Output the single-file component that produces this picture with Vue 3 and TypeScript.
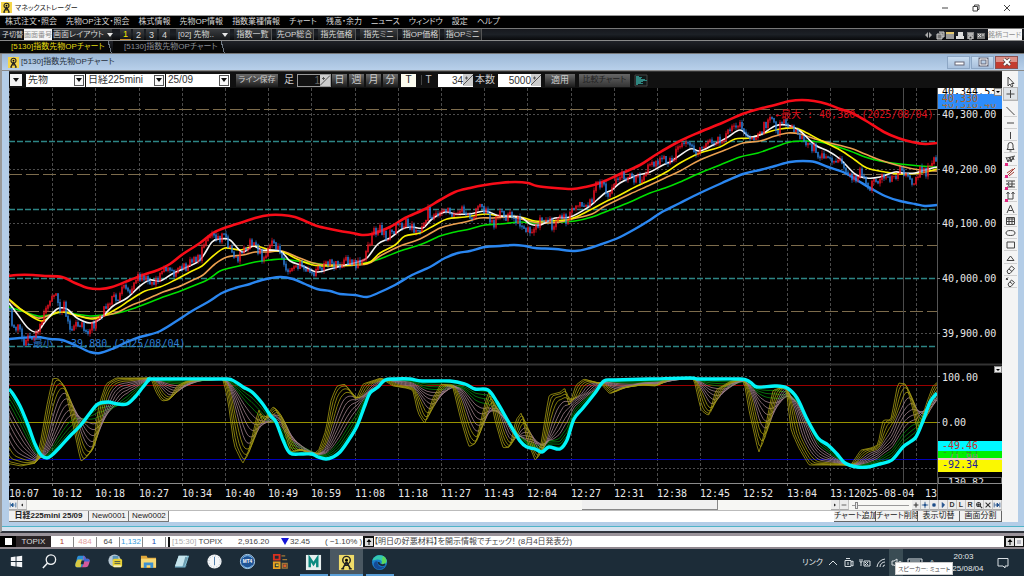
<script setup lang="ts">
import { computed, ref } from 'vue'

type Pt = [number, number]

const menus = ['株式注文・照会', '先物OP注文・照会', '株式情報', '先物OP情報', '指数業種情報', 'チャート', '残高・余力', 'ニュース', 'ウィンドウ', '設定', 'ヘルプ']
const shortcuts = ['指数一覧', '先OP総合', '指先価格', '指先ミニ', '指OP価格', '指OPミニ']
const pages = ['1', '2', '3', '4']
const spans = ['日', '週', '月', '分']
const times = ['10:07', '10:12', '10:18', '10:27', '10:34', '10:40', '10:49', '10:59', '11:08', '11:18', '11:27', '11:43', '12:04', '12:27', '12:31', '12:38', '12:45', '12:52', '13:04', '13:12']
const gridX = Array.from({ length: 22 }, (_, i) => Math.round(9 + 43.2 * i) + 0.5)
const prices = [
  { y: 114, t: '40,300.00' },
  { y: 169, t: '40,200.00' },
  { y: 223, t: '40,100.00' },
  { y: 278, t: '40,000.00' },
  { y: 333, t: '39,900.00' },
]

function parse(s: string): Pt[] {
  return s.trim().split(/\s+/).map((p) => p.split(',').map(Number) as Pt)
}
function valueAt(pts: Pt[], x: number): number {
  if (x <= pts[0][0]) return pts[0][1]
  for (let i = 1; i < pts.length; i++) {
    if (x <= pts[i][0]) {
      const [x0, y0] = pts[i - 1]
      const [x1, y1] = pts[i]
      return y0 + ((y1 - y0) * (x - x0)) / (x1 - x0)
    }
  }
  return pts[pts.length - 1][1]
}
function smooth(pts: Pt[]): string {
  let d = `M${pts[0][0]} ${pts[0][1]}`
  for (let i = 0; i < pts.length - 1; i++) {
    const p0 = pts[Math.max(i - 1, 0)]
    const p1 = pts[i]
    const p2 = pts[i + 1]
    const p3 = pts[Math.min(i + 2, pts.length - 1)]
    const c = [p1[0] + (p2[0] - p0[0]) / 6, p1[1] + (p2[1] - p0[1]) / 6, p2[0] - (p3[0] - p1[0]) / 6, p2[1] - (p3[1] - p1[1]) / 6]
    d += `C${c.map((v) => v.toFixed(1)).join(' ')} ${p2[0]} ${p2[1]}`
  }
  return d
}

const upper = parse('9,276 17,275 33,275 45,276 62,277 75,283 88,288 100,289 112,287 130,280 143,275 158,270 170,264 183,254 200,243 213,233 227,227 243,222 255,218 270,215 282,215 295,217 305,221 317,226 330,229 340,231 352,233 362,235 372,234 390,227 405,218 425,209 440,200 455,192 470,188 485,185 500,183 515,182 528,183 537,186 555,188 572,189 585,187 600,183 618,175 640,165 657,154 680,141 700,132 722,123 740,115 755,110 775,105 790,101 802,100 814,101 827,104 840,109 852,113 868,122 884,132 898,138 912,142 925,144 937,143')
const lower = parse('9,339 20,338 37,337 50,339 62,340 75,345 90,352 100,353 112,349 127,342 140,337 158,332 175,322 192,311 208,302 222,293 235,288 250,284 262,280 280,277 293,279 305,284 317,289 330,291 340,294 355,295 367,297 378,293 395,285 412,275 430,267 445,258 458,253 470,251 485,247 500,246 514,245 525,246 535,248 555,249 575,251 590,248 602,244 618,238 635,229 650,220 662,212 680,203 700,193 722,183 743,174 760,170 775,166 790,162 803,161 815,162 828,167 843,172 857,180 870,188 885,196 900,201 915,204 925,206 937,205')
const green = parse('9,307 22,311 38,316 50,315 62,312 75,314 90,316 103,315 118,313 135,308 148,303 163,297 178,292 193,286 207,280 220,271 230,268 243,265 255,262 270,260 283,259 297,261 313,263 327,265 340,265 358,264 370,262 385,257 400,251 422,244 440,236 455,232 470,229 485,225 500,224 520,222 535,223 560,222 575,221 592,217 610,210 630,202 650,193 665,188 680,182 700,173 720,165 740,157 758,153 775,147 790,142 805,141 820,142 835,146 850,151 865,157 880,161 900,164 920,166 937,167')
const orange = parse('9,300 20,309 38,318 50,315 62,312 75,315 90,318 103,316 118,312 130,306 145,300 163,292 178,287 193,280 203,275 215,264 227,257 243,255 255,252 268,252 282,251 297,257 313,263 325,265 340,265 367,264 380,256 400,246 420,239 440,228 455,224 465,222 480,218 493,218 510,217 525,220 540,223 560,222 572,219 592,214 605,206 630,194 650,185 665,178 680,171 700,160 725,150 743,143 760,141 775,136 788,133 800,134 815,139 830,143 850,148 865,154 880,160 900,166 920,170 937,171')
const yellow = parse('9,299 22,310 38,320 45,320 55,313 65,312 75,315 92,319 103,316 118,308 130,300 145,291 160,287 175,280 190,272 202,266 213,256 225,248 240,250 255,246 270,250 283,252 297,259 313,265 330,266 355,265 370,262 380,253 395,245 405,236 420,233 435,225 447,219 465,217 485,214 500,216 520,217 535,221 548,221 570,219 590,210 605,202 620,195 637,186 655,178 668,171 680,163 700,153 720,147 735,139 750,138 765,133 780,129 795,128 805,132 820,140 840,150 855,160 867,168 885,172 900,174 920,173 937,169')
const white = parse('9,303 18,315 28,328 37,332 45,322 57,309 67,309 77,318 90,323 100,319 113,306 127,298 140,286 150,280 160,281 172,274 185,268 200,260 212,242 220,239 230,240 242,252 253,246 262,250 280,251 290,261 303,266 317,272 330,269 345,265 358,262 367,258 378,244 390,238 402,229 412,227 423,228 432,219 445,212 455,214 470,214 485,211 500,216 520,217 530,224 540,225 555,218 570,217 587,208 597,200 605,193 612,190 620,183 635,176 650,172 663,165 672,161 690,149 700,151 715,144 728,137 740,130 750,137 762,134 775,126 787,125 800,131 815,145 828,151 840,159 855,174 867,178 880,177 895,172 903,173 915,173 925,170 937,167')
const price = parse('9,308 12,322 18,328 24,343 30,337 38,333 42,320 48,307 53,294 57,296 60,308 64,305 68,322 74,330 78,322 88,332 95,322 101,313 112,297 118,299 123,288 128,292 137,277 145,275 153,284 162,272 170,265 175,273 183,268 190,262 200,256 206,236 213,230 219,238 224,234 230,247 237,260 245,248 253,240 262,257 272,244 280,250 287,270 295,262 302,266 313,276 320,266 330,263 340,266 345,260 352,264 360,263 368,248 373,232 380,228 386,237 395,228 405,222 412,228 420,232 428,211 433,216 440,209 447,208 455,215 463,209 470,219 480,204 488,214 493,224 500,215 513,216 522,224 534,233 540,219 547,217 553,226 562,217 568,220 575,205 582,204 587,201 592,203 595,184 603,182 608,195 615,182 622,175 632,178 641,178 645,170 655,163 662,159 670,162 676,152 683,144 690,142 697,153 705,147 713,140 722,142 730,131 738,123 744,132 750,142 757,136 766,123 772,118 777,131 785,119 795,132 803,138 808,147 815,147 820,158 826,152 833,162 840,160 845,173 855,178 860,170 870,187 878,180 882,170 888,179 895,176 900,168 908,176 915,183 920,166 925,174 931,163 935,160 937,165')

const overlays = [
  { d: smooth(lower), c: '#2a86f0', w: 2.4 },
  { d: smooth(upper), c: '#f80c18', w: 2.6 },
  { d: smooth(green), c: '#00e000', w: 1.6 },
  { d: smooth(orange), c: '#eca050', w: 1.6 },
  { d: smooth(yellow), c: '#f8f000', w: 1.6 },
  { d: smooth(white), c: '#f4f4f4', w: 1.6 },
]

const candles = computed(() => {
  let seed = 17
  const rnd = () => {
    seed = (seed * 16807) % 2147483647
    return seed / 2147483647 - 0.5
  }
  const up: string[] = []
  const down: string[] = []
  const upWick: string[] = []
  const downWick: string[] = []
  let prev = price[0][1]
  for (let x = 10; x < 937; x += 2) {
    const close = valueAt(price, x) + rnd() * 9
    const isUp = close < prev
    const top = Math.min(prev, close)
    const bottom = Math.max(prev, close) + 1
    const body = `M${x} ${top.toFixed(1)}V${bottom.toFixed(1)}`
    const wick = `M${x} ${(top - Math.abs(rnd()) * 6).toFixed(1)}V${(bottom + Math.abs(rnd()) * 6).toFixed(1)}`
    ;(isUp ? up : down).push(body)
    ;(isUp ? upWick : downWick).push(wick)
    prev = close
  }
  return { up: up.join(''), down: down.join(''), upWick: upWick.join(''), downWick: downWick.join('') }
})

const slow = parse('9,389 13,394 20,406 28,425 35,444 41,455 47,458 52,455 60,447 70,436 80,426 90,413 98,404 108,402 118,404 127,404 135,397 143,387 149,380 155,379 220,379 232,380 243,387 252,392 262,403 270,415 276,422 283,440 290,453 302,454 312,454 318,457 326,459 333,457 340,452 348,441 357,426 365,405 370,393 378,387 385,380 395,379 410,379 422,381 450,381 465,384 475,389 488,390 497,402 508,421 520,441 527,447 535,449 542,452 549,447 560,449 567,440 574,419 583,408 595,393 604,381 615,380 650,379 690,378 700,379 740,379 750,382 757,387 775,386 787,388 797,398 807,419 818,438 828,445 837,454 845,463 857,467 868,467 880,464 892,460 903,447 910,442 916,437 923,421 930,402 937,393')
const fast = parse('-60,380 -20,380 5,463 20,466 35,463 40,440 46,405 52,378 58,379 64,388 70,415 80,462 86,456 92,448 98,405 105,384 115,378 150,378 155,392 161,401 168,400 176,386 186,381 222,379 227,400 233,445 242,464 248,450 254,425 258,408 262,424 268,412 273,406 280,420 290,452 300,449 310,456 318,450 325,430 330,400 336,386 344,384 355,400 362,384 380,378 392,386 405,388 412,390 417,413 424,424 432,398 440,384 452,387 460,420 468,447 475,443 482,412 488,390 494,420 502,448 509,447 515,420 521,412 526,440 535,462 540,445 548,395 560,392 564,387 568,407 575,385 583,379 600,384 609,394 620,388 640,385 655,386 663,379 693,379 700,410 708,416 715,390 730,381 743,380 748,410 758,454 764,430 772,390 780,388 785,386 790,430 798,448 808,465 850,465 860,450 870,448 877,445 882,420 890,420 897,383 905,384 911,405 917,433 925,405 932,386 937,382')

const fan = Array.from({ length: 13 }, (_, i) => {
  const t = i / 12.5
  const half = 1 + t * 22
  const pts: Pt[] = []
  for (let x = 9; x <= 937; x += 2) {
    let sum = 0
    for (let k = 0; k < 9; k++) sum += valueAt(fast, x - (half * 2 * k) / 9)
    const mix = Math.pow(t, 1.5)
    pts.push([x, (sum / 9) * (1 - mix) + valueAt(slow, x) * mix])
  }
  const c = i < 4 ? '#a49b12' : i < 9 ? '#a08089' : '#078a0c'
  return { d: 'M' + pts.map((p) => `${p[0]} ${p[1].toFixed(1)}`).join('L'), c }
}).reverse()
const slowPath = smooth(slow)

const tools = [
  { n: '選択', d: 'M4 1v9l2-2 1.5 3 1.5-1-1.500-2.500H10z' },
  { n: '十字', d: 'M6.500 2v8M2.500 6h8' },
  { n: 'トレンドライン', d: 'M2.500 2l8 8' },
  { n: '水平線', d: 'M3 6h7' },
  { n: '垂直線', d: 'M6.500 3v7' },
  { n: 'アラーム', d: 'M3 8.500h7L9 7V4a2.500 2.500 0 0 0-5 0v3zM5.500 10h2' },
  { n: '波動', d: 'M2 3l2 5 2-5 1 5 2-5 1 3M3 4l8-2M5 7l4-2', m: true },
  { n: 'チャネル', d: 'M3 10l8-8M3 7l6-4M5 10l5-4', m: true, r: true },
  { n: 'フィボナッチ', d: 'M2 3h9M2 6h9M3 9h8M5 4a2 2 0 1 0 3 4M8 3v6', m: true },
  { n: '期間', d: 'M4 3v6h5V3M2.500 4L4 2l1.500 2M7.500 4L9 2l1.500 2', m: true },
  { n: 'テキスト', d: 'M3 10l3.500-8L10 10M4.500 7.500h4' },
  { n: '表', d: 'M2.500 2.500h8v7h-8zM2.500 4h8M2.500 6.500h8M5 3v6.500M8 3v6.500' },
  { n: '楕円', d: 'M2 6a4.500 2.500 0 1 0 9 0a4.500 2.500 0 1 0-9 0' },
  { n: '四角形', d: 'M3 3h7.500v6H3z' },
  { n: '三角形', d: 'M6.500 4L3 8.500h7z' },
  { n: '消去', d: 'M3 7l4.500-5 3 2.500L6 9.500H4zM5 5l3 2.500' },
  { n: '全消去', d: 'M4 8l3.500-4 3 2.500L7 10.500H5zM2 2l2 2M4 1.500L2 4M6 6l2.500 2' },
]
const navButtons = [
  { n: '拡大', d: 'M5 2v6M2 5h6' },
  { n: '移動', d: 'M5 1v8M1 5h8M4 4h2v2H4z', b: true },
  { n: '停止', d: 'M3.500 3.500h3v3h-3z', b: true },
  { n: '再生', d: 'M4 2l3 3-3 3z', b: true },
]
const navButtons2 = [
  { n: '検索', d: 'M2 4.500a2.500 2.500 0 1 0 5 0a2.500 2.500 0 1 0-5 0M6.500 6.500L9 9M3 4.500h3M4.500 3v3' },
  { n: '閉じる', d: 'M2 2l6 6M8 2L2 8' },
  { n: '最後へ', d: 'M1.500 2v6M8.500 2v6M2 5h5M5 2.500L7.500 5 5 7.500z', b: true },
]
const quotes = [
  { t: '1', c: 'q-red' },
  { t: '484', c: 'q-pink' },
  { t: '64', c: 'q-dark' },
  { t: '1,132', c: 'q-sky' },
  { t: '1', c: 'q-blue' },
]
const product = ref('先物')
const issue = ref('日経225mini')
const month = ref('25/09')
const ticks = ref('34')
const count = ref('5000')
const minutes = ref('1')
const screenNo = ref('')
const code = ref('')
const zoomLevel = ref(5)
</script>

<template>
  <div class="desk">
    <header class="titlebar">
      <svg class="logo" viewBox="0 0 12 12"><rect width="12" height="12" fill="#f5d64a" /><path d="M6 5.500L3 11M6 5.500L9 11M2.500 11h2M7.500 11h2M4 8.500h4" stroke="#222" stroke-width="1.300" fill="none" /><circle cx="6" cy="4" r="2.700" fill="none" stroke="#222" stroke-width="1.200" /><circle cx="6" cy="4" r="1" /></svg>
      <h1>マネックストレーダー</h1>
      <div class="winbtns">
        <button aria-label="最小化"><svg viewBox="0 0 10 10"><path d="M2 5h6" /></svg></button>
        <button aria-label="元に戻す"><svg viewBox="0 0 10 10"><path d="M2 3.500h4.500V8H2zM3.500 3.500V2H8v4.500H6.500" /></svg></button>
        <button aria-label="閉じる"><svg viewBox="0 0 10 10"><path d="M2 2l6 6M8 2L2 8" /></svg></button>
      </div>
    </header>

    <nav class="menu"><a v-for="m in menus" :key="m" href="#">{{ m }}</a></nav>

    <div class="toolbar">
      <span class="sw">子切替</span>
      <input v-model="screenNo" class="screen-no" aria-label="画面番号" placeholder="画面番号" />
      <button class="tb layout">画面レイアウト<i class="tri"></i></button>
      <div class="pages"><button v-for="(p, i) in pages" :key="p" class="tb page" :class="{ on: i === 0 }">{{ p }}</button></div>
      <button class="tb preset"><span>[02] 先物..</span><i class="tri"></i></button>
      <div class="shorts"><button v-for="s in shortcuts" :key="s" class="tb raised">{{ s }}</button></div>
      <svg class="tray-icons" viewBox="0 0 62 10">
        <path d="M4 2v6L1 5zM5 2v6l3-3z" fill="#aaa" /><path d="M13 4h5v5h-5zM15 2h5v5h-2" fill="#777" stroke="#ccc" />
        <path d="M22 2h8v7h-8z" fill="#999" /><path d="M22 2h8v2h-8z" fill="#e4c870" /><path d="M34 2h5v4h-5zM32 6h8v3h-8z" fill="#ddd" />
        <path d="M43 2h7v7h-7z" fill="#888" /><path d="M44 4h5M45 6h3v3h-3z" stroke="#ddd" fill="#333" /><path d="M53 3h8v6h-8z" fill="#777" /><path d="M54 4l3 3M57 4l-3 3M58 5h2" stroke="#ddd" />
      </svg>
      <input v-model="code" class="code" aria-label="銘柄コード" placeholder="銘柄コード" />
    </div>

    <div class="doctabs">
      <a href="#" class="doctab on">[5130]指数先物OPチャート</a>
      <a href="#" class="doctab">[5130]指数先物OPチャート</a>
    </div>

    <section class="mdi">
      <div class="mdi-title">
        <svg class="logo" viewBox="0 0 12 12"><rect width="12" height="12" fill="#f5d64a" /><path d="M6 5.500L3 11M6 5.500L9 11M2.500 11h2M7.500 11h2M4 8.500h4" stroke="#222" stroke-width="1.300" fill="none" /><circle cx="6" cy="4" r="2.700" fill="none" stroke="#222" stroke-width="1.200" /><circle cx="6" cy="4" r="1" /></svg>
        <h2>[5130]指数先物OPチャート</h2>
        <div class="mdi-btns">
          <button aria-label="ウィンドウ最小化"><svg viewBox="0 0 12 10"><rect x="2" y="5" width="9" height="3" fill="#fff" stroke="#667" /></svg></button>
          <button aria-label="ウィンドウ最大化"><svg viewBox="0 0 12 10"><path d="M3 2h7v6H3z" fill="none" stroke="#667" stroke-width="3" /><path d="M3 2h7v6H3z" fill="none" stroke="#fff" /></svg></button>
          <button class="x" aria-label="ウィンドウを閉じる"><svg viewBox="0 0 12 10"><path d="M3 2l6 6M9 2L3 8" stroke="#544" stroke-width="3.500" /><path d="M3 2l6 6M9 2L3 8" stroke="#fff" stroke-width="2" /></svg></button>
        </div>
      </div>

      <div class="mdi-body">
        <div class="main">
          <div class="chartbar">
            <button class="drop" aria-label="メニュー"><i class="tri dark"></i></button>
            <label class="pick p1"><select v-model="product" aria-label="商品"><option>先物</option></select><span class="arr"><i class="tri dark"></i></span></label>
            <label class="pick p2"><select v-model="issue" aria-label="銘柄"><option>日経225mini</option></select><span class="arr"><i class="tri dark"></i></span></label>
            <label class="pick p3"><select v-model="month" aria-label="限月"><option>25/09</option></select><span class="arr"><i class="tri dark"></i></span></label>
            <button class="cb save">ライン保存</button>
            <label class="lab" for="minutes">足</label>
            <div class="num black"><input id="minutes" v-model="minutes" /><svg viewBox="0 0 10 10"><path d="M0 10L10 0M2 3h3M3.500 1.500v3" stroke="#555" /></svg></div>
            <div class="spans"><button v-for="s in spans" :key="s" class="cb sq">{{ s }}</button><button class="cb sq act">T</button></div>
            <label class="lab tl" for="ticks">T</label>
            <div class="num n34"><input id="ticks" v-model="ticks" /><svg viewBox="0 0 10 10"><path d="M0 10L10 0M2 3h3M3.500 1.500v3" stroke="#555" /></svg></div>
            <label class="lab" for="count">本数</label>
            <div class="num n5000"><input id="count" v-model="count" /><svg viewBox="0 0 10 10"><path d="M0 10L10 0M2 3h3M3.500 1.500v3" stroke="#555" /></svg></div>
            <button class="cb apply">適用</button>
            <button class="cb cmp" disabled>比較チャート</button>
            <svg class="depth" viewBox="0 0 14 13"><path d="M1 1h12v11H1z" fill="#101818" stroke="#444" /><path d="M2 2h3v1h3v1h-1v1h4v1h2v1H9v1H7v1h2v1H4v1H2z" fill="#2f8680" /></svg>
          </div>

          <svg class="chart" viewBox="9 88 993 412" role="img" aria-label="日経225mini チャート">
            <defs>
              <clipPath id="plot"><rect x="9" y="88" width="928" height="412" /></clipPath>
              <clipPath id="c1"><rect x="938" y="88" width="64" height="6" /></clipPath>
              <clipPath id="c2"><rect x="938" y="104" width="64" height="5" /></clipPath>
              <clipPath id="c3"><rect x="938" y="451" width="64" height="3" /></clipPath>
              <clipPath id="c4"><rect x="938" y="454" width="64" height="5" /></clipPath>
              <clipPath id="c5"><rect x="938" y="477" width="64" height="6" /></clipPath>
            </defs>
            <rect x="9" y="88" width="993" height="412" fill="#000" />
            <g stroke="#4a4a4a" stroke-dasharray="3 2">
              <path v-for="x in gridX" :key="x" :d="`M${x} 88V483`" />
            </g>
            <g stroke="#4c4c4c" stroke-dasharray="2 2">
              <path v-for="p in prices" :key="p.y" :d="`M9 ${p.y + 0.5}H937`" />
              <path d="M9 376.500H937M9 468.500H937" />
            </g>
            <path d="M9 109.500H937M9 174.500H937M9 245.500H937M9 311.500H937" stroke="#7d6c4c" stroke-dasharray="13 4" />
            <path d="M9 141.500H937M9 209.500H937M9 278.500H937M9 346.500H937" stroke="#2d8585" stroke-width="1.500" stroke-dasharray="6 2" />
            <path d="M9 364.500H1002" stroke="#333" stroke-width="2" />
            <path d="M903.500 88V483" stroke="#4b4b4b" />
            <g clip-path="url(#plot)" fill="none">
              <path :d="candles.upWick" stroke="#d01022" stroke-width=".8" />
              <path :d="candles.downWick" stroke="#2368b4" stroke-width=".8" />
              <path v-for="o in overlays" :key="o.c" :d="o.d" :stroke="o.c" :stroke-width="o.w" />
              <path :d="candles.up" stroke="#f01020" stroke-width="1.300" />
              <path :d="candles.down" stroke="#2c80dc" stroke-width="1.300" />
            </g>
            <text x="27" y="347" fill="#2d7cd0">←最小 : 39,880 (2025/08/04)</text>
            <text x="775" y="118" fill="#dc0c18">←最大 : 40,380 (2025/08/04)</text>

            <path d="M9 385.500H937" stroke="#9a0000" />
            <path d="M9 422.500H937" stroke="#989100" />
            <path d="M9 459.500H937" stroke="#0000b8" />
            <g fill="none" clip-path="url(#plot)">
              <path v-for="(f, i) in fan" :key="i" :d="f.d" :stroke="f.c" stroke-width=".8" />
              <path :d="slowPath" stroke="#00f4f8" stroke-width="3.400" />
            </g>
            <path d="M9 483.500H1002" stroke="#8b8b8b" />
            <path d="M937.500 88V500" stroke="#555" />
            <g stroke="#777">
              <path v-for="x in gridX" :key="x" :d="`M${x} 484v2`" />
              <path v-for="p in prices" :key="p.y" :d="`M937 ${p.y + 0.5}h3`" />
              <path d="M937 376.500h3M937 422.500h3" />
            </g>
            <g fill="#e8e8e8">
              <text v-for="(t, i) in times" :key="t" :x="Math.round(9 + 43.2 * i)" y="497">{{ t }}</text>
              <text v-for="p in prices" :key="p.t" x="942" :y="p.y + 4">{{ p.t }}</text>
              <text x="942" y="381">100.00</text>
              <text x="942" y="426">0.00</text>
              <path d="M854 487h73v13h-73z" fill="#000" />
              <text x="854" y="497">2025-08-04</text>
              <text x="925" y="497">13</text>
            </g>
            <path d="M938 88h64v6h-64z" fill="#fff" />
            <text x="942" y="95" fill="#000" clip-path="url(#c1)">40,344.53</text>
            <path d="M938 94h64v15h-64z" fill="#2e8cfa" />
            <text x="942" y="102" fill="#a8642c">40,330</text>
            <text x="942" y="108" fill="#9a7048" clip-path="url(#c2)">40,318.40</text>
            <g><rect x="994.500" y="88.500" width="7" height="7" fill="#e8e8e8" stroke="#888" /><path d="M996 91h4l-2 2z" /><rect x="994.500" y="366.500" width="7" height="6" fill="#e8e8e8" stroke="#888" /><path d="M996 369h4l-2 2z" /></g>
            <path d="M938 441h64v10h-64z" fill="#00f8ff" />
            <text x="942" y="449" fill="#c0302c">-49.46</text>
            <path d="M938 451h64v7h-64z" fill="#00f000" />
            <text x="942" y="455" fill="#2f9c20" clip-path="url(#c3)">-57.45</text>
            <text x="942" y="461" fill="#8f8a80" clip-path="url(#c4)">-71.90</text>
            <path d="M938 458h64v2h-64z" fill="#f4c8d0" />
            <path d="M938 460h64v12h-64z" fill="#fbf800" />
            <text x="942" y="468" fill="#1c1c9c">-92.34</text>
            <path d="M938.500 483V477.500H1001.500V483" fill="none" stroke="#666" />
            <text x="942" y="486" fill="#e0e0e0" clip-path="url(#c5)">-130.82</text>
          </svg>

          <div class="scroll">
            <button class="sb" aria-label="先頭へ"><svg viewBox="0 0 10 10"><path d="M1.500 2v6M8.500 2v6M2 5h5M5 2.500L2.500 5 5 7.500z" stroke="#235a94" fill="#235a94" /></svg></button>
            <button class="sb" aria-label="左へ"><svg viewBox="0 0 10 10"><path d="M6 3v4L4 5z" /></svg></button>
            <div class="track"><div class="thumb"></div></div>
            <button class="sb" aria-label="右へ"><svg viewBox="0 0 10 10"><path d="M4 3v4l2-2z" /></svg></button>
            <button class="sb" aria-label="縮小"><svg viewBox="0 0 10 10"><path d="M2 5h6" stroke="#444" /></svg></button>
            <input v-model="zoomLevel" class="range" type="range" min="0" max="100" aria-label="倍率" />
            <button v-for="b in navButtons" :key="b.n" class="sb" :aria-label="b.n"><svg viewBox="0 0 10 10"><path :d="b.d" :class="b.b ? 'ib' : 'ik'" /></svg></button>
            <button class="sb tx">D</button><button class="sb tx">L</button><button class="sb tx">R</button>
            <button v-for="b in navButtons2" :key="b.n" class="sb" :aria-label="b.n"><svg viewBox="0 0 10 10"><path :d="b.d" :class="b.b ? 'ib' : 'ik'" /></svg></button>
          </div>

          <div class="sheets">
            <button class="sheet on">日経225mini 25/09</button>
            <button class="sheet">New0001</button>
            <button class="sheet">New0002</button>
            <div class="acts"><button>チャート追加</button><button>チャート削除</button><button>表示切替</button><button>画面分割</button></div>
          </div>
        </div>

        <aside class="palette">
          <div class="tools">
            <button v-for="(t, i) in tools" :key="t.n" :aria-label="t.n" :class="{ on: i === 1 }">
              <svg viewBox="0 0 13 12"><path :d="t.d" fill="none" :stroke="t.r ? '#a43c30' : '#444'" /><path v-if="t.m" d="M1 9h3v3H1z" fill="#e02880" /></svg>
            </button>
          </div>
        </aside>
      </div>
    </section>

    <div class="ticker">
      <button class="tk-box" aria-label="表示切替"><i></i></button>
      <b>TOPIX</b>
      <span v-for="(q, i) in quotes" :key="i" class="q" :class="q.c">{{ q.t }}</span>
      <span class="idx"><em>[15:30]</em> TOPIX</span>
      <span class="val">2,916.20</span>
      <span class="chg"><i></i>32.45</span>
      <span class="pct">( −1.10% )</span>
      <button class="tk-up" aria-label="前へ"><svg viewBox="0 0 8 8"><path d="M0 0h8v8H0z" fill="#ddd" /><path d="M4 1L1.500 4h2v3h1V4h2z" /></svg></button>
      <a class="news" href="#">【明日の好悪材料】を開示情報でチェック！ (8月4日発表分)</a>
      <div class="tk-end">
        <button aria-label="上へ"><svg viewBox="0 0 8 8"><path d="M0 0h8v8H0z" fill="#ddd" /><path d="M4 1L1.500 4h2v3h1V4h2z" /></svg></button>
        <button aria-label="一覧"><svg viewBox="0 0 8 8"><path d="M0 0h8v8H0z" fill="#eee" /><path d="M2 3h4M2 5h4" stroke="#889" /></svg></button>
      </div>
    </div>

    <footer class="taskbar">
      <button aria-label="スタート"><svg viewBox="0 0 18 18"><path d="M3 4.500l5-.7v4.700H3zM9 3.600l6-.8v5.700H9zM3 9.500h5v4.700l-5-.7zM9 9.500h6v5.700l-6-.8z" fill="#f4f6f8" /></svg></button>
      <button aria-label="検索"><svg viewBox="0 0 18 18"><circle cx="10.500" cy="7" r="5" fill="none" stroke="#f0f2f4" stroke-width="1.400" /><path d="M7 10.500L2 16" stroke="#f0f2f4" stroke-width="1.600" /></svg></button>
      <button aria-label="Copilot"><svg viewBox="0 0 18 18"><path d="M5 3h5c2 0 2 2 1.500 4L10 12c-.5 2-1.500 3-3 3H4c-3 0-3-2-2-5l1-4c.5-2 1-3 2-3z" fill="#2a8fd8" /><path d="M4 7h5L7 15H4c-3 0-3-2-2-5z" fill="#d8c840" /><path d="M10 3c2 0 2 1.500 2.500 3H14c3 0 3 2 2 5s-1.500 4-4 4H7c2 0 2-1 3-4z" fill="#d45a9c" /><path d="M10 3c2 0 2 1.500 2.500 3H14c2 0 2.600 1 2.500 3H10l1-4z" fill="#3c68d8" /><path d="M8 8h3l-1 4H7z" fill="#1c2c38" /></svg></button>
      <button aria-label="ツール"><svg viewBox="0 0 18 18"><circle cx="8" cy="8" r="6.500" fill="#b9c9d4" /><path d="M6 3h6v5H6z" fill="#5a94b8" /><rect x="6" y="6" width="10" height="9" rx="2" fill="#e8d034" /><path d="M8 9h6M8 11h6" stroke="#4c5c50" /><path d="M7 13h8v2H7z" fill="#f6f0c0" /></svg></button>
      <button aria-label="エクスプローラー"><svg viewBox="0 0 18 18"><path d="M1 3h6l1 2h9v11H1z" fill="#e0a73a" /><path d="M1 6h16v9H1z" fill="#f8d874" /><path d="M4 10h10v6h-3v-3H7v3H4z" fill="#3d91d2" /></svg></button>
      <button aria-label="メモ"><svg viewBox="0 0 18 18"><path d="M6 3h11l-4 12H2z" fill="#8ccbe0" /><path d="M6 3h9l-5 11H2z" fill="#c5e4ec" /><path d="M2 15h11l1-2" stroke="#54839a" fill="none" /><path d="M13 4l3 1-4 9-2 1z" fill="#6b9caf" /></svg></button>
      <button aria-label="時計"><svg viewBox="0 0 18 18"><circle cx="9" cy="9" r="7.500" fill="#f4f6f8" /><circle cx="9" cy="9" r="6" fill="none" stroke="#aab8c2" stroke-dasharray="1 2.140" /><path d="M9 4v9" stroke="#4878a8" /></svg></button>
      <button aria-label="MT4"><svg viewBox="0 0 18 18"><circle cx="9" cy="9" r="7.500" fill="#1f5496" stroke="#b8d8f0" /><text x="9" y="11" text-anchor="middle" class="mt" fill="#fff">MT4</text><path d="M4 5.500a6 6 0 0 1 10 0M4 13a6 6 0 0 0 10 0" stroke="#8cc8f4" fill="none" /></svg></button>
      <button aria-label="アプリ"><svg viewBox="0 0 18 18"><path d="M2 2h6v5H2z" fill="none" stroke="#d83020" stroke-width="2" /><path d="M2 10h6v6H2z" fill="none" stroke="#e8a020" stroke-width="2" /><path d="M4 12h3v2H4z" fill="#e8d034" /><path d="M10 3h4M11 7h5M11 11h5v5h-5z" stroke="#a07838" fill="none" stroke-width="1.500" /><path d="M12 12h3v3h-3z" fill="#e0602c" /></svg></button>
      <button class="run" aria-label="M"><svg viewBox="0 0 18 18"><path d="M1 1h16v16H1z" fill="#e6eeee" /><path d="M5 14V4.500l4 6 4-6V14" fill="none" stroke="#0a8a80" stroke-width="2.600" /></svg></button>
      <button class="run cur" aria-label="マネックストレーダー"><svg viewBox="0 0 18 18"><path d="M1 1h16v16H1z" fill="#f0dc68" /><circle cx="9" cy="6.500" r="4" fill="none" stroke="#222" stroke-width="1.500" /><circle cx="9" cy="6.500" r="1.500" /><path d="M9 8l-4 7.500M9 8l4 7.500M3.500 15.500h3M11.500 15.500h3M6.500 12h5" stroke="#222" stroke-width="1.600" fill="none" /></svg></button>
      <button class="run" aria-label="Edge"><svg viewBox="0 0 18 18"><circle cx="9" cy="9" r="8" fill="#1a7fc8" /><path d="M1.500 7C3 0 14-1 16.500 6c1 4-2 5-5 4 1-3-3-5-6-4-2 .3-3 1-4 1z" fill="#34c8b0" /><path d="M13 2.500c4 2 5 8 0 8-2 0-3-.5-1.500-1.500.5-3 0-5 1.500-6.500z" fill="#5cd85c" /><path d="M7 8c-1 4 3 7 8 5-4 5-11 4-12-1-.5-3 2-5 4-4z" fill="#154a94" /><path d="M8 8.500c0 2 1.500 3 4 3.500l3-1" stroke="#1c2c38" stroke-width="1.800" fill="none" /></svg></button>

      <div class="tray">
        <span class="link">リンク</span>
        <svg class="g" viewBox="0 0 12 12"><path d="M2 8l4-4 4 4" /></svg>
        <svg class="g g2" viewBox="0 0 12 12"><path d="M2 3.500h6v6H2zM8 5l2-1v5L8 8M3 1.500h4M5 5v3" /></svg>
        <svg class="g g3" viewBox="0 0 12 12"><path d="M1 2v3h2V2M2 5v4M5 4h6v5H5zM6 5l3 3M9 5L6 8" /></svg>
        <svg class="g g4" viewBox="0 0 12 12"><path d="M2 10a9 9 0 0 1 8-8M5 10a5 5 0 0 1 5-5M8 10a2 2 0 0 1 2-2" /></svg>
        <div class="spk"><svg class="g" viewBox="0 0 12 12"><path d="M2 4h2l3-2v8L4 8H2zM9 4l2 3M11 4L9 7" /></svg><div class="tip" role="tooltip">スピーカー: ミュート</div></div>
        <svg class="g kb" viewBox="0 0 16 12"><path d="M1 2h14v8H1zM3 4h10M3 6h10M5 8h6" /></svg>
        <span class="ime">A</span>
        <div class="clock"><time>20:03</time><time>2025/08/04</time></div>
        <button class="note" aria-label="通知"><svg class="g" viewBox="0 0 12 12"><path d="M1 1.500h10v7.500H8v2L6 9H1z" /></svg></button>
      </div>
    </footer>
  </div>
</template>

<style>
html,
body {
  background: #16181c;
}
</style>

<style scoped>
* {
  box-sizing: border-box;
}
.desk {
  display: flex;
  flex-direction: column;
  min-height: 100vh;
  font-family: 'Liberation Sans', 'Noto Sans CJK JP', sans-serif;
  font-feature-settings: 'palt';
  font-size: 8px;
  line-height: 10px;
  color: #d8d8d8;
  overflow: hidden;
}
button,
input,
select {
  font: inherit;
  font-feature-settings: inherit;
  color: inherit;
  margin: 0;
  padding: 0;
  border: 0;
  background: none;
  border-radius: 0;
  white-space: nowrap;
  min-width: 0;
}
a {
  color: inherit;
  text-decoration: none;
}
svg {
  display: block;
}
h1,
h2 {
  margin: 0;
  font-weight: 400;
  color: #222;
  white-space: nowrap;
}
h1 {
  font-size: 7px;
}
h2 {
  font-size: 8px;
  color: #26303c;
}
.titlebar {
  display: flex;
  align-items: center;
  height: 16px;
  padding-left: 1px;
  gap: 3px;
  background: #fff;
  border-bottom: 1px solid #999;
}
.logo {
  width: 11px;
  height: 11px;
}
.winbtns {
  display: flex;
  margin-left: auto;
  gap: 21px;
  padding-right: 12px;
}
.winbtns svg {
  width: 10px;
  height: 10px;
  fill: none;
  stroke: #444;
}
.menu {
  display: flex;
  align-items: center;
  gap: 9px;
  height: 12px;
  padding-left: 5px;
  background: #000;
  white-space: nowrap;
}
.toolbar {
  display: flex;
  align-items: center;
  height: 13px;
  border-top: 1px solid #777;
  border-bottom: 1px solid #8a8a8a;
  background: linear-gradient(#17191e, #1c2026 50%, #08090b);
  padding: 0 2px;
}
.sw {
  width: 22px;
  font-size: 7px;
  white-space: nowrap;
}
.screen-no,
.code {
  background: #f6f6f6;
  height: 11px;
  color: #222;
  font-size: 7px;
}
.screen-no {
  width: 28px;
}
.code {
  width: 34px;
}
input::placeholder {
  color: #909090;
  opacity: 1;
}
.tb {
  display: flex;
  align-items: center;
  justify-content: center;
  gap: 3px;
  height: 11px;
  background: linear-gradient(#3a3d40, #17191b);
}
.tri {
  border: 3px solid transparent;
  border-top: 4px solid #e8e8e8;
  border-bottom: 0;
}
.tri.dark {
  border-top-color: #111;
}
.layout {
  width: 58px;
  margin-left: 2px;
}
.pages {
  display: flex;
  gap: 2px;
  margin-left: 8px;
}
.page {
  width: 11px;
  font-size: 9px;
}
.page.on {
  color: #f4e400;
  border-bottom: 1px solid #c88a28;
}
.preset {
  width: 54px;
  margin-left: 6px;
  justify-content: space-between;
  padding: 0 2px;
}
.shorts {
  display: flex;
  gap: 4px;
  margin-left: 4px;
}
.raised {
  padding: 0 2px;
  width: 38px;
  border-right: 1px solid #555;
}
.tray-icons {
  width: 62px;
  height: 10px;
  margin: 0 2px 0 auto;
}
.doctabs {
  display: flex;
  height: 13px;
  background: linear-gradient(#202228, #08090b);
  border-bottom: 1px solid #777;
}
.doctab {
  width: 113px;
  padding: 1px 0 0 11px;
  background: linear-gradient(75deg, #060606 0 107px, #6e7884 107px 108px, transparent 108px);
  color: #8a8f96;
  white-space: nowrap;
}
.doctab.on {
  color: #e4dc10;
}
.mdi {
  background: #b4cde7;
  border-left: 2px solid #9a9a9a;
  padding: 0 6px 0 7px;
  border-bottom: 2px solid #30343c;
  display: flex;
  flex-direction: column;
}
.mdi::after {
  content: '';
  height: 9px;
  margin: 0 -6px 0 -7px;
  background: linear-gradient(#b4cde7 4px, #4fb4c8 4px 5px, #d6e2ee 5px);
}
.mdi-title {
  display: flex;
  align-items: center;
  gap: 2px;
  height: 17px;
  margin: 0 -6px 0 -7px;
  padding: 0 6px 0 6px;
  background: linear-gradient(#9cb8d6, #b8d0ea);
  border-bottom: 1px solid #888;
}
.mdi-btns {
  display: flex;
  gap: 1px;
  margin-left: auto;
}
.mdi-btns button {
  width: 23px;
  height: 13px;
  border: 1px solid #8ca6c4;
  background: linear-gradient(#c8dcf0, #a8c0dc);
  display: grid;
  place-items: center;
}
.mdi-btns .x {
  background: linear-gradient(#dc9088 45%, #c43c30 50%);
  border-color: #8c5050;
}
.mdi-btns svg {
  width: 12px;
  height: 10px;
}
.mdi-body {
  display: flex;
}
.main {
  flex: 1;
  min-width: 0;
}
.chartbar {
  display: flex;
  align-items: center;
  height: 17px;
  background: #111;
  font-size: 10px;
  padding-left: 1px;
  border-top: 1px solid #333;
}
.drop {
  width: 12px;
  height: 12px;
  background: #f2f2f2;
  display: grid;
  place-items: center;
  margin-right: 4px;
}
.pick {
  display: grid;
  height: 13px;
  background: #fff;
  color: #333;
  margin-right: 1px;
}
.pick > * {
  grid-area: 1 / 1;
}
.pick select {
  appearance: none;
  padding-left: 2px;
  outline: 0;
}
.arr {
  justify-self: end;
  align-self: center;
  width: 10px;
  height: 11px;
  margin-right: 1px;
  border: 1px solid #555;
  background: #fafafa;
  display: grid;
  place-items: center;
  pointer-events: none;
}
.p1 {
  width: 59px;
}
.p2 {
  width: 79px;
}
.p3 {
  width: 64px;
}
.cb {
  height: 13px;
  background: linear-gradient(#6a6a6a, #1c1c1c);
  color: #ccc;
  text-align: center;
}
.save {
  width: 42px;
  margin-left: 5px;
  font-size: 8px;
}
.lab {
  margin: 0 3px 0 6px;
  color: #c8c8c8;
}
.num {
  display: flex;
  height: 13px;
  background: #fff;
  color: #333;
}
.num input {
  flex: 1;
  width: 0;
  text-align: right;
}
.num svg {
  width: 10px;
  height: 12px;
  background: #ccc;
}
.num.black {
  width: 34px;
  background: #111;
  color: #666;
  border: 1px solid #999;
}
.num.black svg {
  height: 11px;
}
.spans {
  display: flex;
  gap: 2px;
  margin-left: 1px;
}
.sq {
  width: 15px;
}
.sq.act {
  background: #fbfbee;
  color: #222;
  margin-left: 1px;
}
.tl {
  width: 14px;
  margin: 0 3px 0 5px;
  text-align: center;
  border-left: 1px solid #444;
}
.n34 {
  width: 35px;
}
.n34 + .lab {
  margin: 0 3px 0 2px;
}
.n5000 {
  width: 43px;
}
.apply {
  width: 30px;
  margin-left: 4px;
  font-size: 9px;
}
.cmp {
  width: 51px;
  margin-left: 4px;
  background: linear-gradient(#666, #333);
  color: #222;
  font-size: 8px;
}
.depth {
  width: 14px;
  height: 13px;
  margin-left: 4px;
}
.chart {
  width: 100%;
  height: auto;
  font-family: 'DejaVu Sans Mono', 'Noto Sans CJK JP', monospace;
  font-size: 10px;
  font-feature-settings: normal;
}
.chart text {
  white-space: pre;
}
.scroll {
  display: flex;
  height: 10px;
  background: #f7f7f4;
}
.sb {
  width: 9px;
  height: 10px;
  background: #ececec;
  border-right: 1px solid #c4c4c4;
  border-bottom: 1px solid #aaa;
  display: grid;
  place-items: center;
  color: #333;
  flex: none;
}
.sb svg {
  width: 8px;
  height: 8px;
}
.ik {
  fill: none;
  stroke: #333;
  stroke-width: 1.3;
}
.ib {
  fill: #1f4f8c;
  stroke: #1f4f8c;
}
.tx {
  font-size: 7px;
  font-weight: 700;
}
.track {
  flex: 1;
}
.thumb {
  width: 17%;
  height: 10px;
  margin-left: 69%;
  background: #f0f0f0;
  border-right: 1px solid #888;
  border-bottom: 1px solid #888;
}
.range {
  appearance: none;
  width: 57px;
  height: 10px;
  margin: 0 3px;
  background: linear-gradient(transparent 5px, #999 5px 6px, transparent 6px);
}
.range::-webkit-slider-thumb {
  appearance: none;
  width: 3px;
  height: 7px;
  background: #eee;
  border: 1px solid #888;
}
.sheets {
  display: flex;
  height: 12px;
  background: #fff;
  border-top: 1px solid #bbb;
  color: #222;
}
.sheet {
  background: #f0f0f0;
  border-right: 1px solid #777;
  border-bottom: 1px solid #777;
  padding: 0 3px;
  width: 40px;
}
.sheet.on {
  font-weight: 700;
  width: 80px;
}
.acts {
  display: flex;
  margin-left: auto;
}
.acts button {
  width: 42px;
  background: #f2f2f2;
  border-right: 1px solid #666;
  border-bottom: 1px solid #666;
}
.palette {
  width: 16px;
  background: #f4f4f4;
  padding: 5px 1px 0 2px;
}
.tools {
  display: flex;
  flex-direction: column;
  justify-content: space-between;
  height: 212px;
}
.palette button {
  display: block;
  width: 13px;
  height: 12px;
  border-bottom: 1px solid #d0d0d0;
}
.palette button.on {
  background: #e0e4e8;
  outline: 1px solid #b4b4b4;
  margin-bottom: 4px;
}
.palette svg {
  width: 13px;
  height: 12px;
}
.ticker {
  display: flex;
  align-items: center;
  height: 16px;
  background: #fff;
  border-top: 3px solid #9a939a;
  border-bottom: 2px solid #8e878e;
  color: #444;
  white-space: nowrap;
}
.ticker > * {
  flex: none;
}
.tk-box {
  width: 16px;
  height: 11px;
  background: #000;
  display: grid;
  place-items: center;
}
.tk-box i {
  width: 7px;
  height: 7px;
  background: #fff;
}
.ticker b {
  width: 35px;
  height: 11px;
  line-height: 11px;
  background: #2a2426;
  color: #ddd;
  font-weight: 400;
  text-align: center;
}
.q {
  width: 23px;
  text-align: center;
  border-right: 1px solid #888;
}
.q-red {
  color: #b03830;
}
.q-pink {
  color: #e4a09c;
}
.q-sky {
  color: #3a9cdc;
}
.q-blue {
  color: #2448b0;
}
.idx {
  width: 70px;
  padding-left: 2px;
  border-left: 2px solid #111;
  margin-left: 2px;
}
.idx em {
  font-style: normal;
  color: #aaa;
}
.val {
  width: 43px;
}
.chg {
  width: 44px;
  display: flex;
  align-items: center;
  gap: 1px;
}
.chg i {
  border: 4px solid transparent;
  border-top: 7px solid #1414d8;
  border-bottom: 0;
}
.pct {
  width: 38px;
}
.tk-up {
  width: 11px;
  height: 11px;
  background: #111;
  display: grid;
  place-items: center;
}
.ticker svg {
  width: 8px;
  height: 8px;
}
.tk-end {
  display: flex;
  gap: 1px;
  width: 20px;
  height: 11px;
  align-items: center;
  padding-left: 2px;
  background: #111;
  margin-left: auto;
}
.taskbar {
  display: flex;
  height: 27px;
  background: #1c2c38;
  color: #e4e8ea;
}
.taskbar > button {
  width: 33px;
  height: 27px;
  display: grid;
  place-items: center;
  border-bottom: 2px solid transparent;
  flex: none;
}
.taskbar > button svg {
  width: 17px;
  height: 17px;
}
.taskbar > .run {
  background: linear-gradient(#5a9fd8, #5a9fd8) bottom / 28px 2px no-repeat;
  border-bottom: 0;
}
.taskbar > .cur {
  background: linear-gradient(#5a9fd8, #5a9fd8) bottom / 33px 2px no-repeat, #4a5862;
}
.mt {
  font-size: 5px;
  font-weight: 700;
}
.tray {
  display: flex;
  align-items: center;
  margin-left: auto;
  padding-right: 15px;
}
.g {
  width: 12px;
  height: 12px;
  fill: none;
  stroke: #d8dee2;
  stroke-width: 1;
}
.link {
  margin-right: 4px;
}
.g2,
.g3,
.g4 {
  margin-left: 4px;
}
.spk {
  position: relative;
  width: 14px;
  height: 27px;
  margin-left: 2px;
  background: #3a4c54;
  display: grid;
  place-items: center;
}
.tip {
  position: absolute;
  left: 6px;
  top: 13px;
  height: 13px;
  padding: 1px 2px;
  background: #fff;
  border: 1px solid #ccc;
  color: #444;
  font-size: 6px;
  white-space: nowrap;
}
.kb {
  width: 16px;
  margin-left: 4px;
}
.ime {
  width: 18px;
  text-align: center;
  font-size: 9px;
}
.clock {
  display: flex;
  flex-direction: column;
  align-items: center;
  gap: 2px;
  width: 45px;
}
.note {
  margin-left: 11px;
}
</style>
